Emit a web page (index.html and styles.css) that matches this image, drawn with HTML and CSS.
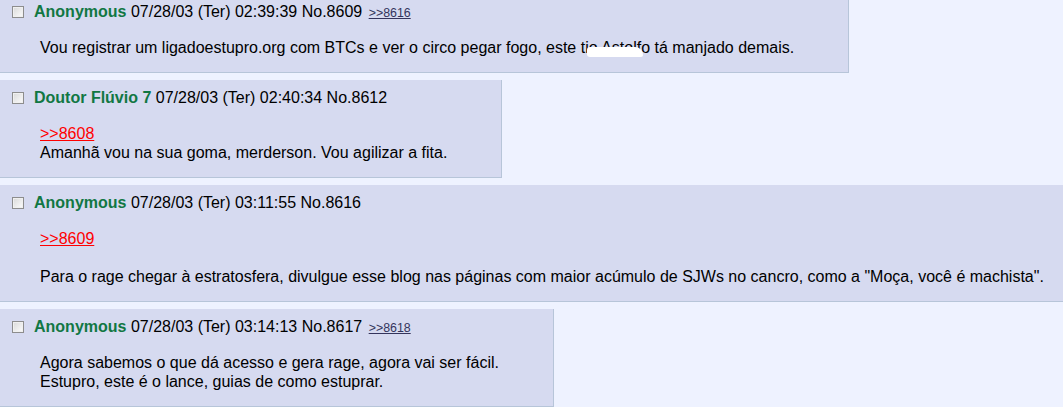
FILE: index.html
```html
<!DOCTYPE html>
<html>
<head>
<meta charset="utf-8">
<link rel="stylesheet" href="styles.css">
</head>
<body>
<div class="thread">
  <div class="postContainer first">
    <div class="reply">
      <div class="postInfo"><span class="cb"></span><span class="name">Anonymous</span> <span class="dateTime">07/28/03 (Ter) 02:39:39</span> <span class="postNum">No.8609</span> <span class="backlink"><a class="bl">&gt;&gt;8616</a></span></div>
      <blockquote class="postMessage">Vou registrar um ligadoestupro.org com BTCs e ver o circo pegar fogo, este t<span class="redact">io Astolf</span>o tá manjado demais.</blockquote>
    </div>
  </div>
  <div class="postContainer">
    <div class="reply">
      <div class="postInfo"><span class="cb"></span><span class="name">Doutor Flúvio 7</span> <span class="dateTime">07/28/03 (Ter) 02:40:34</span> <span class="postNum">No.8612</span></div>
      <blockquote class="postMessage"><a class="quotelink">&gt;&gt;8608</a><br>Amanhã vou na sua goma, merderson. Vou agilizar a fita.</blockquote>
    </div>
  </div>
  <div class="postContainer">
    <div class="reply">
      <div class="postInfo"><span class="cb"></span><span class="name">Anonymous</span> <span class="dateTime">07/28/03 (Ter) 03:11:55</span> <span class="postNum">No.8616</span></div>
      <blockquote class="postMessage"><a class="quotelink">&gt;&gt;8609</a><br><br>Para o rage chegar à estratosfera, divulgue esse blog nas páginas com maior acúmulo de SJWs no cancro, como a "Moça, você é machista".</blockquote>
    </div>
  </div>
  <div class="postContainer">
    <div class="reply">
      <div class="postInfo"><span class="cb"></span><span class="name">Anonymous</span> <span class="dateTime">07/28/03 (Ter) 03:14:13</span> <span class="postNum">No.8617</span> <span class="backlink"><a class="bl">&gt;&gt;8618</a></span></div>
      <blockquote class="postMessage">Agora sabemos o que dá acesso e gera rage, agora vai ser fácil.<br>Estupro, este é o lance, guias de como estuprar.</blockquote>
    </div>
  </div>
</div>
</body>
</html>
```

FILE: styles.css
```css
html, body {
  margin: 0;
  padding: 0;
  background: #eef2ff;
  overflow: hidden;
}
body {
  width: 1063px;
  height: 407px;
  font-family: "Liberation Sans", Arial, sans-serif;
  font-size: 16px;
  color: #000;
}
.thread {
  overflow: hidden;
}
.postContainer {
  margin-bottom: 7px;
}
.postContainer.first {
  margin-top: -6px;
}
.reply {
  width: max-content;
  background: #d6daf0;
  border-right: 1px solid #b7c5d9;
  border-bottom: 1px solid #b7c5d9;
  white-space: nowrap;
}
.postInfo {
  padding: 6px 0 0 12px;
  line-height: 24px;
  height: 24px;
}
.cb {
  display: inline-block;
  box-sizing: border-box;
  width: 12px;
  height: 12px;
  border: 1px solid #8d8d8d;
  background: linear-gradient(135deg, #d9d9d9 0%, #f2f2f2 70%, #fbfbfb 100%);
  box-shadow: inset 0 0 0 1px #f0f0f0;
  margin-right: 10px;
  vertical-align: -1px;
}
.name {
  color: #117743;
  font-weight: bold;
}
.backlink {
  margin-left: 2px;
}
.bl {
  font-size: 12.4px;
  color: #34345c;
  text-decoration: underline;
}
.postMessage {
  margin: 14px 54px 15px 40px;
  font-size: 16px;
  line-height: 19px;
}
.quotelink {
  color: #ff0000;
  text-decoration: underline;
}
.redact {
  position: relative;
}
.redact::after {
  content: "";
  position: absolute;
  left: 2px;
  right: -2px;
  top: 8px;
  height: 10px;
  background: #fff;
  border-radius: 3px 8px 2px 3px;
}
```
